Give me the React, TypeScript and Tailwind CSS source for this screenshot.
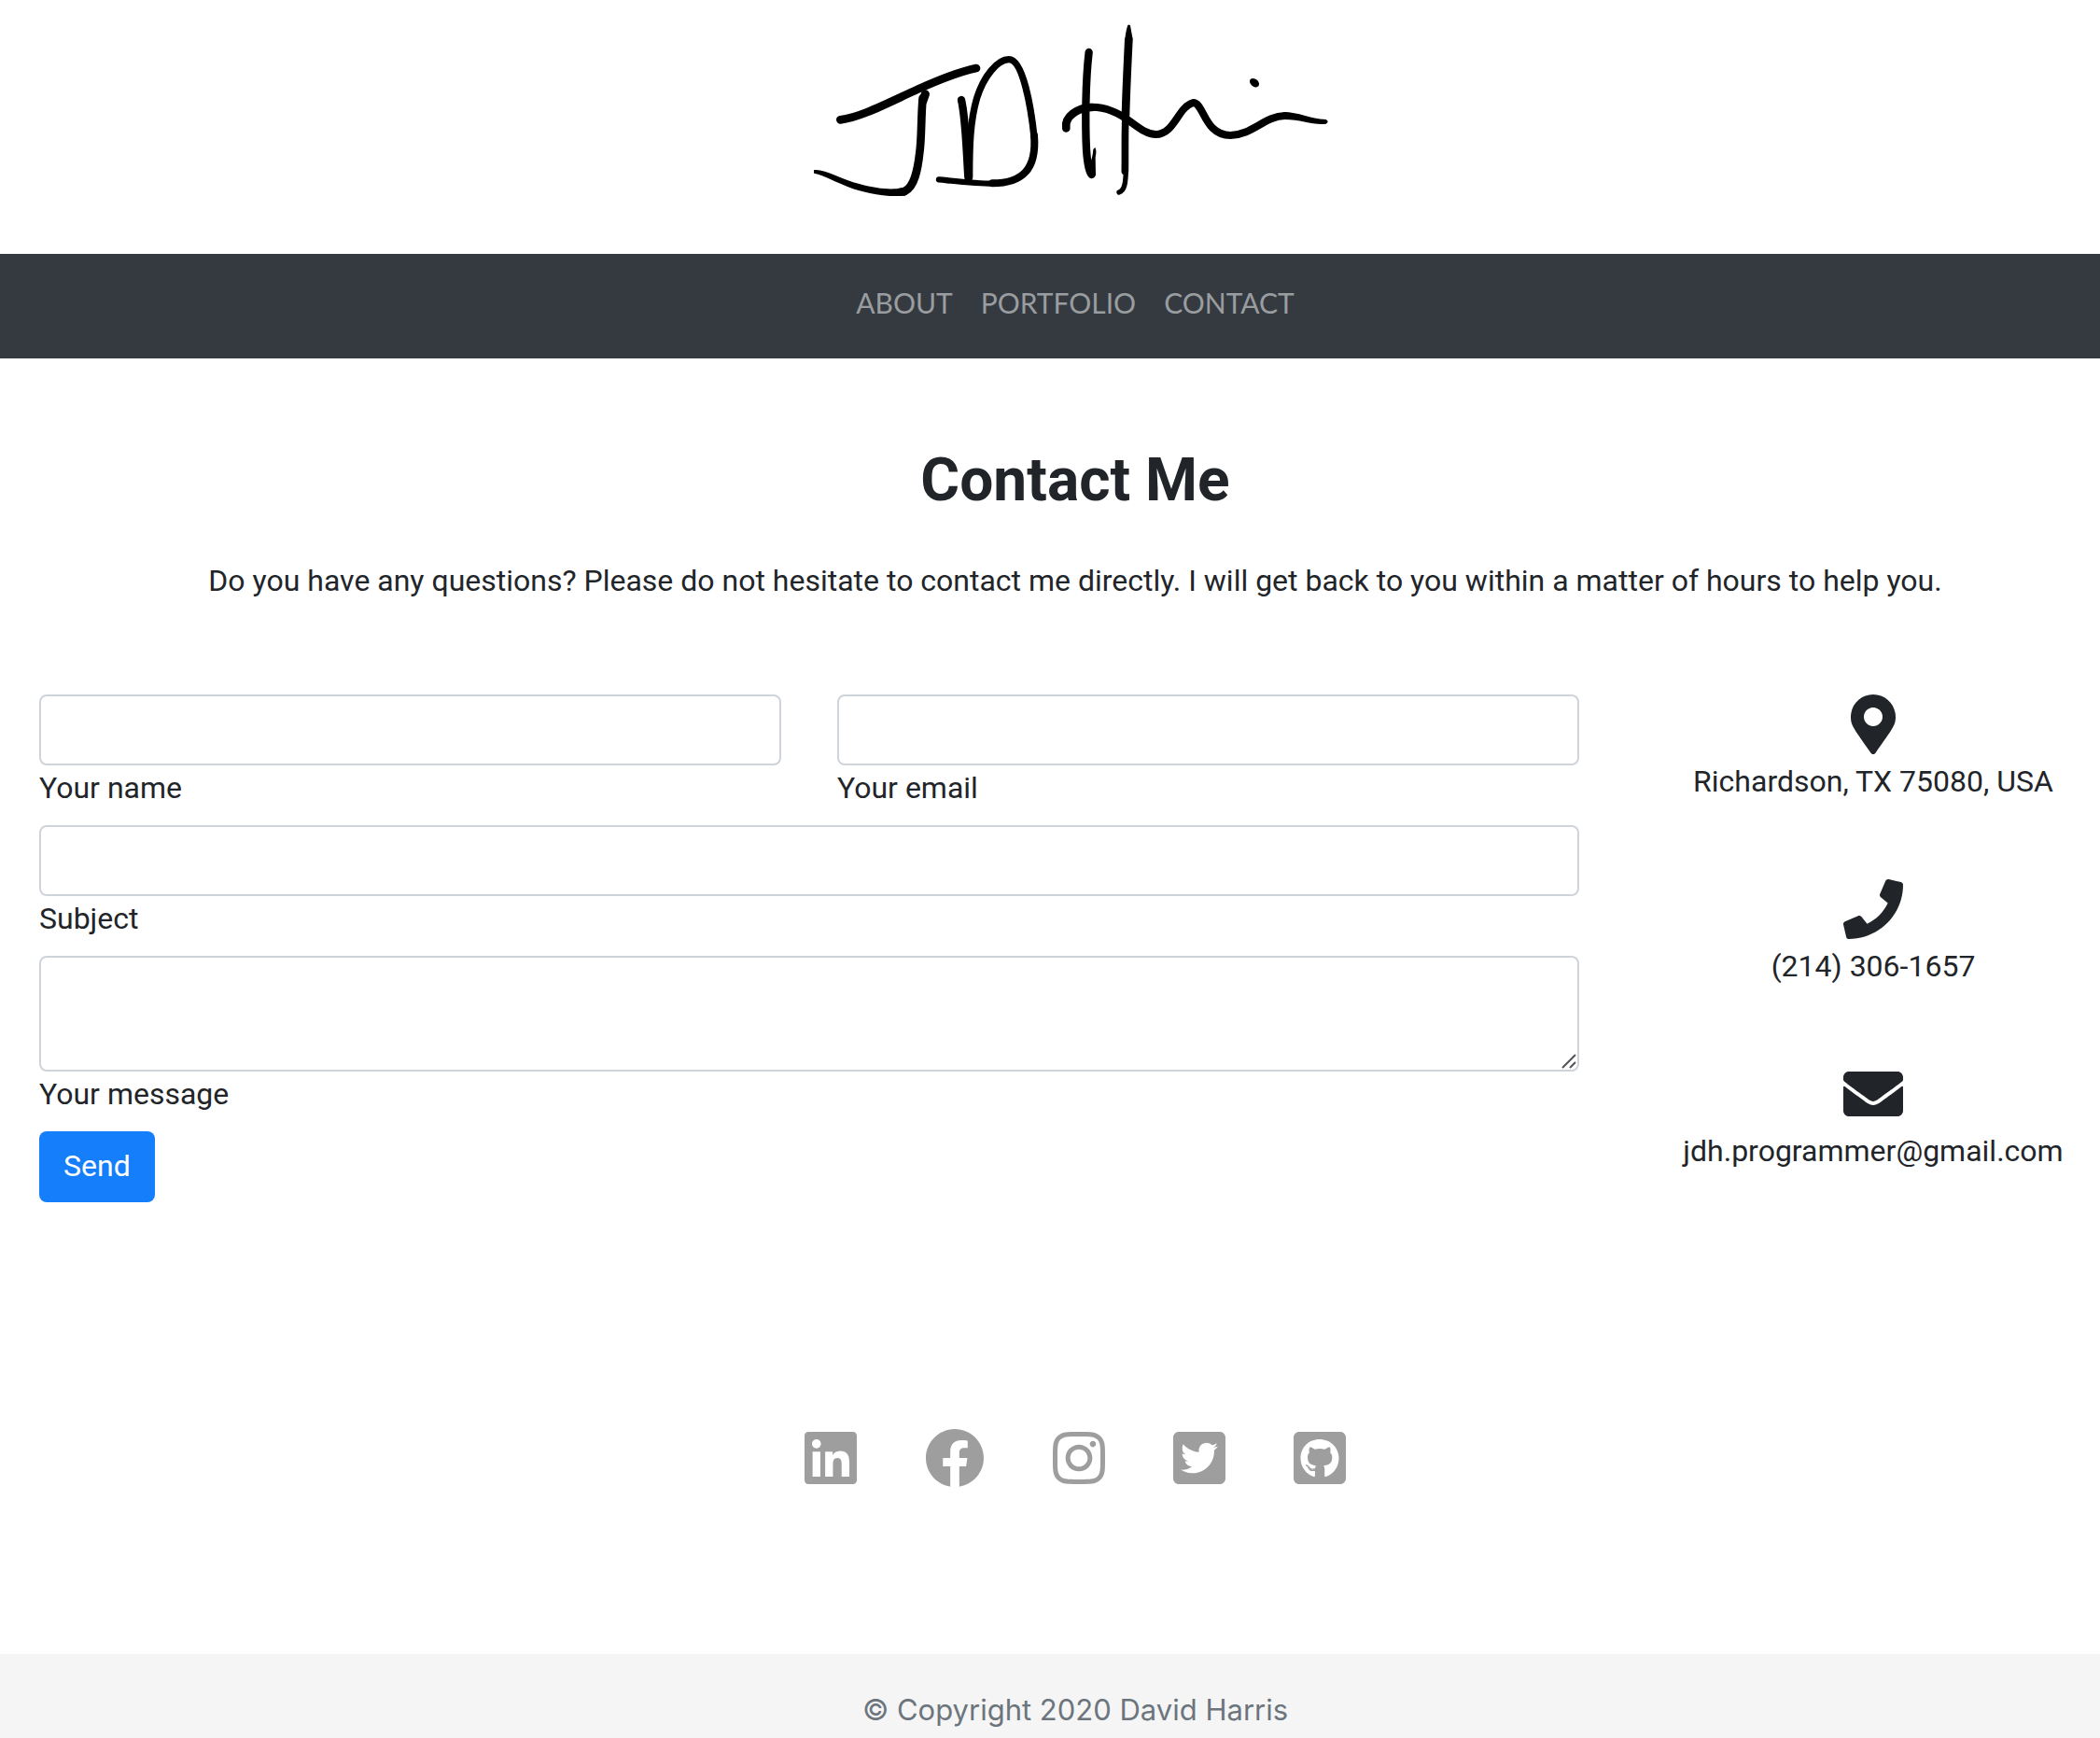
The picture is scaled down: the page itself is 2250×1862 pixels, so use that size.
import type { ReactNode } from "react";
import {
  FaEnvelope,
  FaFacebook,
  FaGithubSquare,
  FaInstagram,
  FaLinkedin,
  FaMapMarkerAlt,
  FaPhone,
  FaTwitterSquare,
} from "react-icons/fa";

const field =
  "block w-full rounded-lg border-2 border-[#ced4da] bg-white px-6 py-3 text-[32px] leading-[48px] focus:outline-none focus:border-[#80bdff]";

function Signature() {
  return (
    <svg viewBox="66 60 1680 600" className="h-[200px] w-[560px]" role="img" aria-label="JD Harris">
      <g fill="none" stroke="#000" strokeLinecap="round" strokeLinejoin="round">
        <path strokeWidth="26" d="M151 385C215 378 305 330 400 287C465 258 530 231 588 219" />
        <path strokeWidth="28" d="M424 303L416 325" />
        <path strokeWidth="26" d="M416 315C410 375 413 440 406 490C400 545 390 600 358 615" />
        <path strokeWidth="25" d="M540 321C554 380 556 480 562 570" />
        <path
          strokeWidth="22"
          d="M566 570C566 470 568 390 590 315C612 245 656 191 693 191C738 191 764 345 774 440"
        />
        <path strokeWidth="24" d="M774 435C783 545 735 589 640 589" />
        <path strokeWidth="19" d="M640 590C590 590 520 582 468 577" />
      </g>
      <path d="M67 546C105 543 150 575 215 592C265 606 320 612 345 604L372 600L360 629C290 635 220 617 180 602C135 585 100 564 67 557Q61 551 67 546Z" />
      <g transform="translate(840 0)">
        <g fill="none" stroke="#000" strokeLinecap="round" strokeLinejoin="round">
          <path strokeWidth="25" d="M110 168C99 260 98 400 102 480C105 525 110 555 119 561" />
          <path strokeWidth="26" d="M37 412C30 375 75 345 120 345" />
          <path
            strokeWidth="24"
            d="M110 345C165 341 210 366 245 392C280 418 300 432 325 432C385 432 395 345 445 330C480 330 480 434 565 435C635 434 675 373 740 372"
          />
          <path strokeWidth="26" d="M238 128C234 210 230 290 228 370" />
          <path strokeWidth="23" d="M228 370C225 440 227 500 226 550" />
          <path strokeWidth="16" d="M229 540C229 590 224 612 207 618" />
        </g>
        <path d="M130 474Q136 484 131 505L132 564L108 560L116 518Q122 505 124 480Z" />
        <path d="M235 81Q239 77 243 82Q246 100 251 125L238 150L226 125Q229 98 235 81Z" />
        <path d="M735 360C785 360 820 382 872 384Q884 391 872 398C830 403 790 383 735 384Z" />
        <ellipse cx="642" cy="266" rx="17" ry="12" transform="rotate(40 642 266)" />
      </g>
    </svg>
  );
}

function Field({ id, label, children }: { id: string; label: string; children: ReactNode }) {
  return (
    <div>
      {children}
      <label htmlFor={id} className="block">
        {label}
      </label>
    </div>
  );
}

const links = ["ABOUT", "PORTFOLIO", "CONTACT"];

const contacts = [
  { Icon: FaMapMarkerAlt, text: "Richardson, TX 75080, USA" },
  { Icon: FaPhone, text: "(214) 306-1657" },
  { Icon: FaEnvelope, text: "jdh.programmer@gmail.com" },
];

const socials = [
  { Icon: FaLinkedin, name: "LinkedIn", size: "h-16 w-14" },
  { Icon: FaFacebook, name: "Facebook", size: "h-16 w-16" },
  { Icon: FaInstagram, name: "Instagram", size: "h-16 w-14" },
  { Icon: FaTwitterSquare, name: "Twitter", size: "h-16 w-14" },
  { Icon: FaGithubSquare, name: "GitHub", size: "h-16 w-14" },
];

export default function App() {
  return (
    <div className="flex min-h-screen flex-col overflow-x-hidden bg-white font-['Roboto',sans-serif] text-[32px] leading-[48px] text-[#212529]">
      <header className="flex justify-center pt-5 pb-[52px] pl-[54px]">
        <Signature />
      </header>

      <nav className="flex justify-center gap-[30px] bg-[#343a40] pt-7 pb-9 pl-[54px] font-['Lato',sans-serif] text-[30px] text-[#9a9da0]">
        {links.map((link) => (
          <a key={link} href={"#" + link.toLowerCase()}>
            {link}
          </a>
        ))}
      </nav>

      <main>
        <section className="pt-[91px] pl-[54px] text-center">
          <h1 className="text-[64px] leading-[80px] font-bold">Contact Me</h1>
          <p className="pt-[43px]">
            Do you have any questions? Please do not hesitate to contact me directly. I will get back to you within a
            matter of hours to help you.
          </p>
        </section>

        <section className="grid grid-cols-[minmax(0,1fr)_486px] gap-[72px] pt-[98px] pl-[42px]">
          <form className="flex flex-col gap-4" onSubmit={(event) => event.preventDefault()}>
            <div className="grid grid-cols-2 gap-[60px]">
              <Field id="name" label="Your name">
                <input id="name" type="text" className={field} />
              </Field>
              <Field id="email" label="Your email">
                <input id="email" type="email" className={field} />
              </Field>
            </div>
            <Field id="subject" label="Subject">
              <input id="subject" type="text" className={field} />
            </Field>
            <Field id="message" label="Your message">
              <div className="relative">
                <textarea id="message" rows={2} className={field + " resize-none"} />
                <svg
                  viewBox="0 0 18 18"
                  className="pointer-events-none absolute right-0.5 bottom-0.5 size-[18px]"
                  fill="none"
                  stroke="#555"
                  strokeWidth="2"
                  aria-hidden="true"
                >
                  <path d="M2 16L16 2M10 16L16 10" />
                </svg>
              </div>
            </Field>
            <button type="submit" className="self-start rounded-lg bg-[#157efb] px-[26px] pt-[13px] pb-[15px] text-white">
              Send
            </button>
          </form>

          <ul className="flex flex-col gap-[81px] text-center">
            {contacts.map(({ Icon, text }) => (
              <li key={text} className="flex flex-col items-center gap-[5px]">
                <Icon className="size-16" />
                <p>{text}</p>
              </li>
            ))}
          </ul>
        </section>
      </main>

      <div className="flex justify-center gap-[73px] pt-[242px] pb-[178px] pl-[54px] text-[#9e9e9e]">
        {socials.map(({ Icon, name, size }) => (
          <a key={name} href={"#" + name.toLowerCase()} aria-label={name}>
            <Icon className={size} />
          </a>
        ))}
      </div>

      <footer className="grow bg-[#f5f5f5] pt-9 pl-[54px] text-center font-['Inter',sans-serif] text-[31px] text-[#6c757d]">
        <p>© Copyright 2020 David Harris</p>
      </footer>
    </div>
  );
}
